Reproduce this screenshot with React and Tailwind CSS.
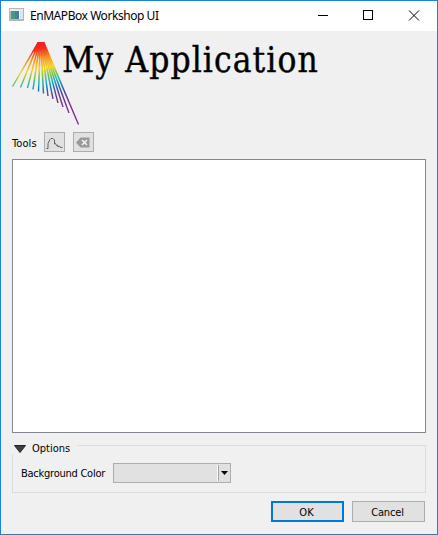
const rays = [
  [12.5, 86.5], [20.5, 87.5], [27.5, 88], [33, 89.5], [38.5, 91.5], [43.5, 93.5],
  [48, 96], [53, 99], [58, 103], [63, 107], [69, 113], [78.5, 124.5],
];

function Logo() {
  return (
    <svg className="block h-[84px] w-[68px] shrink-0" viewBox="12 42 68 84">
      <defs>
        <linearGradient id="spectrum" gradientUnits="userSpaceOnUse" x1="41" y1="42" x2="55" y2="106">
          <stop offset="0" stopColor="#ed1c24" />
          <stop offset="0.1" stopColor="#f2301f" />
          <stop offset="0.25" stopColor="#f7941d" />
          <stop offset="0.4" stopColor="#f5d327" />
          <stop offset="0.51" stopColor="#7cc243" />
          <stop offset="0.61" stopColor="#19b5c4" />
          <stop offset="0.71" stopColor="#1c75bc" />
          <stop offset="0.84" stopColor="#5b3a96" />
          <stop offset="1" stopColor="#7a2a90" />
        </linearGradient>
      </defs>
      <g fill="url(#spectrum)">
        <path d="M38 42h6l4 10H32z" />
        {rays.map(([x, y], i) => (
          <path key={x} d={`M${37.6 + i * 0.45} 42h1.900L${x + 0.7} ${y}h-1.400z`} />
        ))}
      </g>
    </svg>
  );
}

function PlotIcon() {
  return (
    <svg className="size-[17px]" viewBox="0 0 17 17" fill="none" stroke="#59625c" strokeWidth="1">
      <path d="M.5 14.500h1.500V9.500L4 5.500 5 4.500h2L8.500 6v4l1-.5 1 2 1-.5.5 2 1.500-1 1 1.500h2" />
    </svg>
  );
}

function ClearIcon() {
  return (
    <svg className="size-[17px]" viewBox="0 0 17 17">
      <path d="M1 8.500 5.500 3.500h9v10h-9z" fill="#999" />
      <path d="m7 6 5 5m0-5-5 5" stroke="#f4f4f4" strokeWidth="1.5" />
    </svg>
  );
}

const tool = "flex h-5 w-[21px] items-center justify-center border border-[#adadad] bg-[#e1e1e1]";

export default function App() {
  return (
    <div className="flex h-[535px] w-[438px] flex-col border border-[#1883d7] bg-[#f0f0f0] font-['DejaVu_Sans_Condensed','DejaVu_Sans',sans-serif] text-[11px] leading-[14px] text-black">
      <header className="flex h-[30px] shrink-0 items-center bg-white pl-2">
        <svg className="mb-[3px] h-[13px] w-[15px]" viewBox="0 0 15 13">
          <path d="M0 0h15v13H0z" fill="#b4b8bb" />
          <path d="M1 1h13v2H1z" fill="#e8edf1" />
          <path d="M2 3h8v8H2z" fill="#477f9f" />
          <path d="M2 3h4v8H2z" fill="#469a80" />
          <path d="M10 3h1v8h-1z" fill="#fff" />
          <path d="M11 3h3v8h-3z" fill="#dbe6e6" />
        </svg>
        <h1 className="ml-1.5 grow whitespace-nowrap font-['Noto_Sans',sans-serif] text-[12px] tracking-[-0.45px]">EnMAPBox Workshop UI</h1>
        <svg className="h-[30px] w-[138px]" viewBox="0 0 138 30" fill="none" stroke="#000" shapeRendering="crispEdges">
          <path d="M19 14.500h10M64.500 9.500h9v9h-9z" />
          <path d="m110 9.500 10 10m0-10-10 10" shapeRendering="auto" />
        </svg>
      </header>
      <main className="flex grow flex-col px-[11px] pt-[11px]">
        <div className="flex h-[84px] shrink-0">
          <Logo />
          <h2 className="-ml-[18px] whitespace-nowrap font-['DejaVu_Serif_Condensed','DejaVu_Serif',serif] text-[35px] leading-[37px] tracking-[1.1px] [-webkit-text-stroke:0.4px_#000]">My Application</h2>
        </div>
        <div className="mt-[6px] flex h-5 shrink-0 items-center">
          <span className="w-8 whitespace-nowrap pt-[3px] tracking-[0.1px]">Tools</span>
          <button className={tool}><PlotIcon /></button>
          <button className={`${tool} ml-2`}><ClearIcon /></button>
        </div>
        <div className="mt-[7px] h-[274px] w-[414px] shrink-0 border border-[#828790] bg-white" />
        <section className="mt-2 w-[414px] shrink-0">
          <div className="flex h-[13px]">
            <h3 className="flex h-[14px] w-[65px] shrink-0 items-center whitespace-nowrap">
              <svg className="mr-1.5 ml-0.5 mt-0.5 h-2 w-3 shrink-0" viewBox="0 0 12 8"><path d="M.5.5h11L6 7.500z" fill="#404040" stroke="#222" /></svg>
              <span className="pt-px">Options</span>
            </h3>
            <div className="mt-1 grow border-t border-r border-[#dcdcdc]" />
          </div>
          <div className="flex h-[39px] items-start border-x border-b border-[#dcdcdc] pt-[9px] pl-2">
            <span className="w-[92px] whitespace-nowrap pt-1 tracking-[-0.25px]">Background Color</span>
            <div className="flex h-5 w-[118px] items-center justify-end border border-[#adadad] bg-[#e1e1e1]">
              <span className="h-4 w-[2px] border-r border-[#a0a0a0] bg-white" />
              <svg className="mx-[2px] h-1 w-[7px]" viewBox="0 0 7 4"><path d="M0 0h7L3.500 4z" /></svg>
            </div>
          </div>
        </section>
        <div className="mt-2 flex justify-end gap-2 pr-px">
          <button className="h-[21px] w-[73px] border-2 border-[#0078d7] bg-[#e1e1e1] pt-0.5 pr-0.5">OK</button>
          <button className="h-[21px] w-[73px] border border-[#adadad] bg-[#e1e1e1] pt-0.5 pr-0.5 tracking-[-0.15px]">Cancel</button>
        </div>
      </main>
    </div>
  );
}
